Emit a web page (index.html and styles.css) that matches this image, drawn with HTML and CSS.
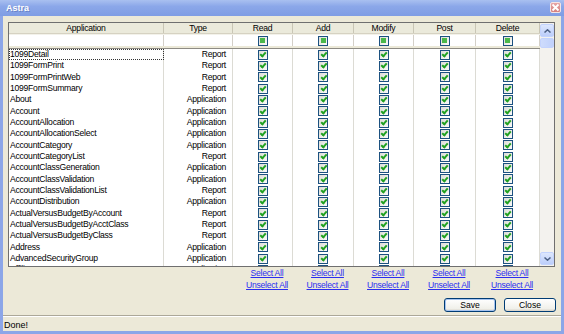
FILE: index.html
```html
<!DOCTYPE html>
<html lang="en">
<head>
  <meta charset="UTF-8">
  <title>Astra</title>
  <link rel="stylesheet" href="styles.css">
</head>
<body>
  <div class="window">
    <div class="titlebar">
      <span class="title">Astra</span>
      <span class="close">
        <svg width="9" height="9" viewBox="0 0 9 9"><path d="M1.5 1.5 L7.5 7.5 M7.5 1.5 L1.5 7.5" stroke="#fff" stroke-width="1.8"/></svg>
      </span>
    </div>

    <div class="client">
      <div class="frame">
        <div class="table">
          <!-- Column headers -->
          <div class="row head">
            <span class="c">Application</span>
            <span class="c">Type</span>
            <span class="c">Read</span>
            <span class="c">Add</span>
            <span class="c">Modify</span>
            <span class="c">Post</span>
            <span class="c">Delete</span>
          </div>
          <!-- Filter row -->
          <div class="row filter">
            <span class="c"></span>
            <span class="c"></span>
            <span class="c chk"><i class="cb mixed"></i></span>
            <span class="c chk"><i class="cb mixed"></i></span>
            <span class="c chk"><i class="cb mixed"></i></span>
            <span class="c chk"><i class="cb mixed"></i></span>
            <span class="c chk"><i class="cb mixed"></i></span>
          </div>
          <div class="gap"></div>

          <div class="list">
            <div class="row"><span class="c name focus">1099Detail</span><span class="c type">Report</span><span class="c chk"><i class="cb on"></i></span><span class="c chk"><i class="cb on"></i></span><span class="c chk"><i class="cb on"></i></span><span class="c chk"><i class="cb on"></i></span><span class="c chk"><i class="cb on"></i></span></div>
            <div class="row"><span class="c name">1099FormPrint</span><span class="c type">Report</span><span class="c chk"><i class="cb on"></i></span><span class="c chk"><i class="cb on"></i></span><span class="c chk"><i class="cb on"></i></span><span class="c chk"><i class="cb on"></i></span><span class="c chk"><i class="cb on"></i></span></div>
            <div class="row"><span class="c name">1099FormPrintWeb</span><span class="c type">Report</span><span class="c chk"><i class="cb on"></i></span><span class="c chk"><i class="cb on"></i></span><span class="c chk"><i class="cb on"></i></span><span class="c chk"><i class="cb on"></i></span><span class="c chk"><i class="cb on"></i></span></div>
            <div class="row"><span class="c name">1099FormSummary</span><span class="c type">Report</span><span class="c chk"><i class="cb on"></i></span><span class="c chk"><i class="cb on"></i></span><span class="c chk"><i class="cb on"></i></span><span class="c chk"><i class="cb on"></i></span><span class="c chk"><i class="cb on"></i></span></div>
            <div class="row"><span class="c name">About</span><span class="c type">Application</span><span class="c chk"><i class="cb on"></i></span><span class="c chk"><i class="cb on"></i></span><span class="c chk"><i class="cb on"></i></span><span class="c chk"><i class="cb on"></i></span><span class="c chk"><i class="cb on"></i></span></div>
            <div class="row"><span class="c name">Account</span><span class="c type">Application</span><span class="c chk"><i class="cb on"></i></span><span class="c chk"><i class="cb on"></i></span><span class="c chk"><i class="cb on"></i></span><span class="c chk"><i class="cb on"></i></span><span class="c chk"><i class="cb on"></i></span></div>
            <div class="row"><span class="c name">AccountAllocation</span><span class="c type">Application</span><span class="c chk"><i class="cb on"></i></span><span class="c chk"><i class="cb on"></i></span><span class="c chk"><i class="cb on"></i></span><span class="c chk"><i class="cb on"></i></span><span class="c chk"><i class="cb on"></i></span></div>
            <div class="row"><span class="c name">AccountAllocationSelect</span><span class="c type">Application</span><span class="c chk"><i class="cb on"></i></span><span class="c chk"><i class="cb on"></i></span><span class="c chk"><i class="cb on"></i></span><span class="c chk"><i class="cb on"></i></span><span class="c chk"><i class="cb on"></i></span></div>
            <div class="row"><span class="c name">AccountCategory</span><span class="c type">Application</span><span class="c chk"><i class="cb on"></i></span><span class="c chk"><i class="cb on"></i></span><span class="c chk"><i class="cb on"></i></span><span class="c chk"><i class="cb on"></i></span><span class="c chk"><i class="cb on"></i></span></div>
            <div class="row"><span class="c name">AccountCategoryList</span><span class="c type">Report</span><span class="c chk"><i class="cb on"></i></span><span class="c chk"><i class="cb on"></i></span><span class="c chk"><i class="cb on"></i></span><span class="c chk"><i class="cb on"></i></span><span class="c chk"><i class="cb on"></i></span></div>
            <div class="row"><span class="c name">AccountClassGeneration</span><span class="c type">Application</span><span class="c chk"><i class="cb on"></i></span><span class="c chk"><i class="cb on"></i></span><span class="c chk"><i class="cb on"></i></span><span class="c chk"><i class="cb on"></i></span><span class="c chk"><i class="cb on"></i></span></div>
            <div class="row"><span class="c name">AccountClassValidation</span><span class="c type">Application</span><span class="c chk"><i class="cb on"></i></span><span class="c chk"><i class="cb on"></i></span><span class="c chk"><i class="cb on"></i></span><span class="c chk"><i class="cb on"></i></span><span class="c chk"><i class="cb on"></i></span></div>
            <div class="row"><span class="c name">AccountClassValidationList</span><span class="c type">Report</span><span class="c chk"><i class="cb on"></i></span><span class="c chk"><i class="cb on"></i></span><span class="c chk"><i class="cb on"></i></span><span class="c chk"><i class="cb on"></i></span><span class="c chk"><i class="cb on"></i></span></div>
            <div class="row"><span class="c name">AccountDistribution</span><span class="c type">Application</span><span class="c chk"><i class="cb on"></i></span><span class="c chk"><i class="cb on"></i></span><span class="c chk"><i class="cb on"></i></span><span class="c chk"><i class="cb on"></i></span><span class="c chk"><i class="cb on"></i></span></div>
            <div class="row"><span class="c name">ActualVersusBudgetByAccount</span><span class="c type">Report</span><span class="c chk"><i class="cb on"></i></span><span class="c chk"><i class="cb on"></i></span><span class="c chk"><i class="cb on"></i></span><span class="c chk"><i class="cb on"></i></span><span class="c chk"><i class="cb on"></i></span></div>
            <div class="row"><span class="c name">ActualVersusBudgetByAcctClass</span><span class="c type">Report</span><span class="c chk"><i class="cb on"></i></span><span class="c chk"><i class="cb on"></i></span><span class="c chk"><i class="cb on"></i></span><span class="c chk"><i class="cb on"></i></span><span class="c chk"><i class="cb on"></i></span></div>
            <div class="row"><span class="c name">ActualVersusBudgetByClass</span><span class="c type">Report</span><span class="c chk"><i class="cb on"></i></span><span class="c chk"><i class="cb on"></i></span><span class="c chk"><i class="cb on"></i></span><span class="c chk"><i class="cb on"></i></span><span class="c chk"><i class="cb on"></i></span></div>
            <div class="row"><span class="c name">Address</span><span class="c type">Application</span><span class="c chk"><i class="cb on"></i></span><span class="c chk"><i class="cb on"></i></span><span class="c chk"><i class="cb on"></i></span><span class="c chk"><i class="cb on"></i></span><span class="c chk"><i class="cb on"></i></span></div>
            <div class="row"><span class="c name">AdvancedSecurityGroup</span><span class="c type">Application</span><span class="c chk"><i class="cb on"></i></span><span class="c chk"><i class="cb on"></i></span><span class="c chk"><i class="cb on"></i></span><span class="c chk"><i class="cb on"></i></span><span class="c chk"><i class="cb on"></i></span></div>
            <div class="row"><span class="c name">Affiliate</span><span class="c type">Application</span><span class="c chk"><i class="cb on"></i></span><span class="c chk"><i class="cb on"></i></span><span class="c chk"><i class="cb on"></i></span><span class="c chk"><i class="cb on"></i></span><span class="c chk"><i class="cb on"></i></span></div>
          </div>
        </div>

        <div class="scrollbar">
          <div class="sb-btn">
            <svg width="7" height="4" viewBox="0 0 7 4"><path d="M0.5 3.5 L3.5 0.8 L6.5 3.5" fill="none" stroke="#4d6185" stroke-width="1.5"/></svg>
          </div>
          <div class="sb-thumb"></div>
          <div class="sb-track"></div>
          <div class="sb-btn">
            <svg width="7" height="4" viewBox="0 0 7 4"><path d="M0.5 0.5 L3.5 3.2 L6.5 0.5" fill="none" stroke="#4d6185" stroke-width="1.5"/></svg>
          </div>
        </div>
      </div>

      <div class="links">
        <span></span>
        <span></span>
        <span class="pair"><a href="#">Select All</a><a href="#">Unselect All</a></span>
        <span class="pair"><a href="#">Select All</a><a href="#">Unselect All</a></span>
        <span class="pair"><a href="#">Select All</a><a href="#">Unselect All</a></span>
        <span class="pair"><a href="#">Select All</a><a href="#">Unselect All</a></span>
        <span class="pair"><a href="#">Select All</a><a href="#">Unselect All</a></span>
      </div>

      <div class="actions">
        <button class="btn default">Save</button>
        <button class="btn">Close</button>
      </div>

      <div class="status">Done!</div>
    </div>
  </div>
</body>
</html>
```

FILE: styles.css
```css
body {
  margin: 0;
  font-family: "Liberation Sans", Arial, sans-serif;
  font-size: 8.6px;
  letter-spacing: -0.25px;
  color: #000;
}

.window {
  width: 564px;
  height: 334px;
  display: flex;
  flex-direction: column;
  background: #8ca6e8;
}

/* Title bar */
.titlebar {
  height: 17px;
  display: flex;
  align-items: center;
  justify-content: space-between;
  padding: 0 3px 0 4px;
  background: linear-gradient(#a9c0f0, #8ba7e9 40%, #7f9de4);
}

.title {
  color: #fff;
  font-weight: bold;
  font-size: 9px;
  letter-spacing: 0;
  text-shadow: 1px 1px 0 rgba(60, 80, 150, 0.4);
  padding-left: 2px;
}

.close {
  width: 11px;
  height: 11px;
  margin-top: -1px;
  border: 1px solid #f4e4e4;
  border-radius: 2px;
  background: linear-gradient(#e6a6a6, #d5807f);
  display: flex;
  align-items: center;
  justify-content: center;
  box-sizing: border-box;
}

/* Client area */
.client {
  flex: 1;
  display: flex;
  flex-direction: column;
  margin: 0 3px 3px 3px;
  background: #ece9d8;
}

.frame {
  display: flex;
  width: 547px;
  height: 245px;
  margin: 6px 0 0 5px;
  border: 1px solid #6f6f6f;
  box-sizing: border-box;
  background: #ece9d8;
}

.table {
  width: 531px;
  display: flex;
  flex-direction: column;
}

.row {
  display: grid;
  grid-template-columns: 155px 69px 60px 61px 60px 62px 64px;
  height: 11.33px;
  line-height: 11px;
}

.c {
  border-right: 1px solid #e4e3dc;
  white-space: nowrap;
  overflow: hidden;
  box-sizing: border-box;
}

.head {
  height: 11px;
  background: #ebeadb;
  border-bottom: 1px solid #d6d2c2;
  box-sizing: border-box;
  line-height: 10px;
}

.head .c {
  text-align: center;
  border-right-color: #c9c6b5;
}

.filter {
  height: 12px;
  background: #fff;
  border-top: 1px solid #f3f2ea;
  box-sizing: border-box;
}

.filter .c {
  border-right-color: #d4d0c8;
}

.gap {
  height: 3px;
  border-bottom: 1px solid #8d8b84;
  box-sizing: border-box;
}

.list {
  flex: 1;
  overflow: hidden;
  background: #fff;
}

.list .c {
  border-right-color: #dcdbd4;
}

.name {
  padding-left: 1px;
}

.focus {
  outline: 1px dotted #333;
  outline-offset: -1px;
}

.type {
  text-align: right;
  padding-right: 6px;
}

.chk {
  display: flex;
  align-items: center;
  justify-content: center;
}

/* Checkboxes */
.cb {
  position: relative;
  width: 8px;
  height: 8px;
  border: 1px solid #1c5180;
  background: linear-gradient(135deg, #dcdcd7, #fbfbf9);
}

.cb.on::after {
  content: "";
  position: absolute;
  left: 2.5px;
  top: 0.5px;
  width: 2px;
  height: 4px;
  border: solid #21a121;
  border-width: 0 2px 2px 0;
  transform: rotate(42deg);
}

.cb.mixed::after {
  content: "";
  position: absolute;
  left: 1.5px;
  top: 1.5px;
  width: 5px;
  height: 5px;
  background: #4ab84a;
}

/* Scrollbar */
.scrollbar {
  width: 14px;
  display: flex;
  flex-direction: column;
  background: #f3f2ee;
}

.sb-btn {
  height: 13px;
  margin: 1px 0;
  border: 1px solid #c3d3fd;
  border-radius: 2px;
  background: linear-gradient(#dde7fd, #bccefa);
  display: flex;
  align-items: center;
  justify-content: center;
  box-sizing: border-box;
}

.sb-thumb {
  height: 10px;
  border: 1px solid #c3d3fd;
  border-radius: 2px;
  background: linear-gradient(90deg, #cedcfc, #c0d1fb);
  box-sizing: border-box;
}

.sb-track {
  flex: 1;
}

/* Select / unselect links */
.links {
  display: grid;
  grid-template-columns: 155px 69px 60px 61px 60px 62px 64px;
  margin: 0 0 0 6px;
  height: 24px;
}

.pair {
  display: flex;
  flex-direction: column;
  align-items: center;
  padding-left: 8px;
  line-height: 12px;
}

.pair a {
  color: #2a2ef0;
  text-decoration: underline;
}

/* Buttons */
.actions {
  display: flex;
  justify-content: flex-end;
  gap: 8px;
  padding-right: 5px;
  margin-top: 7px;
}

.btn {
  width: 52px;
  height: 14px;
  padding: 0;
  font-family: "Liberation Sans", Arial, sans-serif;
  font-size: 8.6px;
  color: #000;
  border: 1px solid #003c74;
  border-radius: 3px;
  background: linear-gradient(#ffffff, #f0f0ea 80%, #d6d0c5);
}

.btn.default {
  box-shadow: inset 0 0 0 1px #a6c4f0;
}

/* Status bar */
.status {
  flex: 1;
  margin-top: 3px;
  border-top: 1px solid #aca899;
  box-shadow: inset 0 1px 0 #fff;
  padding: 3px 0 0 1px;
  line-height: 12px;
  font-size: 9px;
  letter-spacing: 0;
}
```
